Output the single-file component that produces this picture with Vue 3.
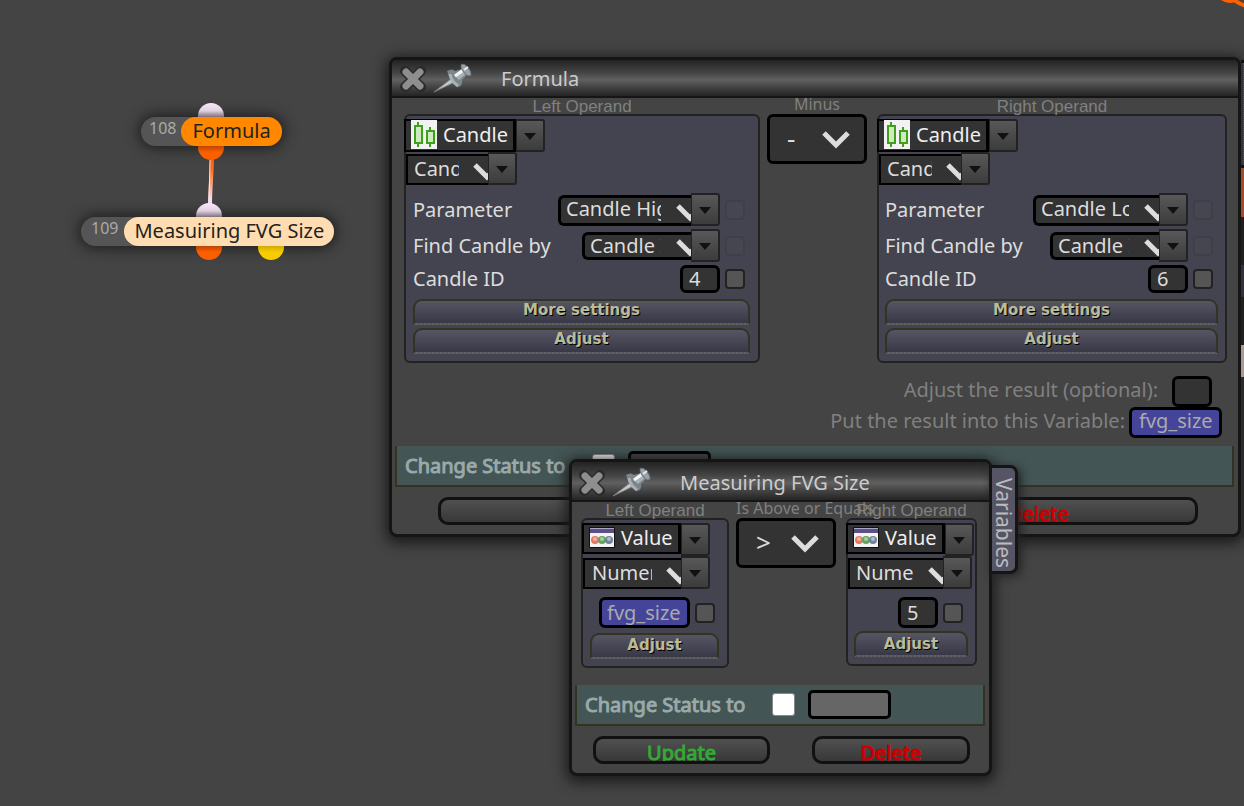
<script setup>
import { reactive } from 'vue'

const nodes = [
  { id: 108, title: 'Formula', kind: 'formula', ports: ['top', 'out'] },
  { id: 109, title: 'Measuiring FVG Size', kind: 'measure', ports: ['top', 'out', 'alt'] },
]

const windows = reactive([
  {
    key: 'formula', title: 'Formula', opLabel: 'Minus', op: '-',
    operands: [
      {
        side: 'left', label: 'Left Operand', source: 'Candle', icon: 'candle', type: 'Candle',
        selects: [
          { label: 'Parameter', value: 'Candle High', size: 'wide' },
          { label: 'Find Candle by', value: 'Candle ID', size: 'mid' },
        ],
        field: { label: 'Candle ID', value: '4' }, buttons: ['More settings', 'Adjust'],
      },
      {
        side: 'right', label: 'Right Operand', source: 'Candle', icon: 'candle', type: 'Candle',
        selects: [
          { label: 'Parameter', value: 'Candle Low', size: 'wide' },
          { label: 'Find Candle by', value: 'Candle ID', size: 'mid' },
        ],
        field: { label: 'Candle ID', value: '6' }, buttons: ['More settings', 'Adjust'],
      },
    ],
    adjust: '', variable: 'fvg_size', status: false, statusText: '',
  },
  {
    key: 'measure', title: 'Measuiring FVG Size', opLabel: 'Is Above or Equals', op: '>',
    operands: [
      {
        side: 'left', label: 'Left Operand', source: 'Value', icon: 'value', type: 'Numeric',
        selects: [], field: { label: '', value: 'fvg_size', variable: true }, buttons: ['Adjust'],
      },
      {
        side: 'right', label: 'Right Operand', source: 'Value', icon: 'value', type: 'Numeric',
        selects: [], field: { label: '', value: '5' }, buttons: ['Adjust'],
      },
    ],
    status: false, statusText: '',
  },
])
</script>

<template>
  <main class="canvas">
    <svg class="wires" aria-hidden="true">
      <defs>
        <linearGradient id="wire" x1="0" y1="0" x2="0" y2="1">
          <stop offset="0" stop-color="#ff6000" />
          <stop offset="0.25" stop-color="#ff6a18" />
          <stop offset="0.9" stop-color="#f2e2f4" />
        </linearGradient>
      </defs>
      <path d="M212 156 C212 175 210 185 210 206" fill="none" stroke="url(#wire)" stroke-width="4" />
      <path d="M210 160 L209 206" fill="none" stroke="#f2e2f4" stroke-width="1" />
      <path d="M1220 -3 Q1228 3 1234 0 Q1240 4 1248 7" fill="none" stroke="#ff6000" stroke-width="4" />
    </svg>

    <section v-for="n in nodes" :key="n.id" class="node" :class="n.kind">
      <i v-for="p in n.ports" :key="p" class="port" :class="p"></i>
      <span class="node-id">{{ n.id }}</span>
      <span class="node-title">{{ n.title }}</span>
    </section>

    <aside class="behind" aria-hidden="true">
      <i class="b-card"></i><i class="b-orange"></i><i class="b-dark"></i><i class="b-slim"></i><i class="b-dark"></i><i class="b-tan"></i>
    </aside>

    <section v-for="w in windows" :key="w.key" class="window" :class="'w-' + w.key">
      <header class="titlebar">
        <button class="tool" aria-label="Close">
          <svg width="26" height="28" viewBox="0 0 26 28">
            <path d="M5 6 L21 22 M21 6 L5 22" stroke="#2a2a2a" stroke-width="10" stroke-linecap="round" />
            <path d="M6 7 L20 21 M20 7 L6 21" stroke="#8e8e8e" stroke-width="7" stroke-linecap="round" />
          </svg>
        </button>
        <button class="tool" aria-label="Pin">
          <svg width="42" height="32" viewBox="0 0 42 32">
            <path d="M2 29 L20 15 L23 19 Z" fill="#c4c8ca" stroke="#72787c" stroke-width="1" />
            <path d="M15 8 Q20 5 23 8 L30 6 L35 12 L30 17 Q31 23 26 24 Q19 21 15 8 Z" fill="#7b858c" />
            <path d="M18 11 Q19 18 26 23" fill="none" stroke="#a9b2b7" stroke-width="3" />
            <path d="M22 12 L31 5 L35 10 L27 17 Z" fill="#aab2b6" />
            <path d="M23 13 L33 6" stroke="#f3f6f7" stroke-width="3" />
            <ellipse cx="34" cy="7" rx="3" ry="7" transform="rotate(-38 34 7)" fill="#99a3a9" stroke="#69747c" />
            <path d="M32 7 L36 4" stroke="#e6eaec" stroke-width="2" />
          </svg>
        </button>
        <h2>{{ w.title }}</h2>
      </header>

      <div class="body">
        <div class="equation">
          <template v-for="(o, i) in w.operands" :key="o.side">
            <div v-if="i === 1" class="operator">
              <label class="op-caption" :for="w.key + '-op'">{{ w.opLabel }}</label>
              <div class="op-box">
                <select :id="w.key + '-op'"><option>{{ w.op }}</option></select>
                <svg class="chevron" width="28" height="20" viewBox="0 0 28 20"><path d="M2 3 L14 15 L26 3" /></svg>
              </div>
            </div>
            <div class="operand" :class="o.side">
              <div class="caption">{{ o.label }}</div>
              <div class="card">
                <div class="source">
                  <button class="source-name">
                    <svg v-if="o.icon === 'candle'" width="26" height="29" viewBox="0 0 26 29">
                      <rect width="26" height="29" fill="#f2f2f2" />
                      <g fill="#cdebbf" stroke="#3fa01c" stroke-width="2">
                        <path d="M7 2 V6 M7 23 V27 M19 7 V11 M19 23 V27" />
                        <rect x="4" y="6" width="7" height="17" /><rect x="16" y="11" width="7" height="12" />
                      </g>
                    </svg>
                    <svg v-else width="26" height="22" viewBox="0 0 26 22">
                      <rect width="26" height="21" rx="1" fill="#111" />
                      <rect x="1" y="1" width="24" height="19" fill="#f4f4f4" />
                      <rect x="1" y="2" width="24" height="4" fill="#5b5184" /><rect x="1" y="1" width="24" height="1" fill="#aaa4c6" />
                      <circle cx="6" cy="13" r="4" fill="#e57863" /><circle cx="13" cy="13" r="4" fill="#64a060" /><circle cx="20" cy="13" r="4" fill="#70829c" />
                      <circle cx="6" cy="12" r="2" fill="#f4b0a0" /><circle cx="13" cy="12" r="2" fill="#a8d0a0" /><circle cx="20" cy="12" r="2" fill="#b0bccc" />
                    </svg>
                    <span>{{ o.source }}</span>
                  </button>
                  <button class="drop" aria-label="Open list"><i></i></button>
                </div>
                <div class="combo type">
                  <div class="clip">
                    <select aria-label="Type"><option>{{ o.type }}</option></select>
                    <svg class="chevron" width="28" height="20" viewBox="0 0 28 20"><path d="M2 3 L14 15 L26 3" /></svg>
                  </div>
                  <button class="drop" aria-label="Open list"><i></i></button>
                </div>
                <div v-for="s in o.selects" :key="s.label" class="row">
                  <label :for="w.key + o.side + s.size">{{ s.label }}</label>
                  <div class="combo" :class="s.size">
                    <div class="clip">
                      <select :id="w.key + o.side + s.size"><option>{{ s.value }}</option></select>
                      <svg class="chevron" width="28" height="20" viewBox="0 0 28 20"><path d="M2 3 L14 15 L26 3" /></svg>
                    </div>
                    <button class="drop" aria-label="Open list"><i></i></button>
                  </div>
                  <input type="checkbox" class="check" disabled :aria-label="s.label + ' option'" />
                </div>
                <div class="row field">
                  <label :for="w.key + o.side + 'v'">{{ o.field.label }}</label>
                  <input :id="w.key + o.side + 'v'" v-model="o.field.value" type="text" class="text" :class="{ variable: o.field.variable }" aria-label="Value" />
                  <input type="checkbox" class="check" aria-label="Value option" />
                </div>
                <button v-for="b in o.buttons" :key="b" class="more">{{ b }}</button>
              </div>
            </div>
          </template>
        </div>

        <div v-if="w.variable" class="result">
          <label for="adjust">Adjust the result (optional):</label>
          <input id="adjust" v-model="w.adjust" type="text" class="text adjust" />
        </div>
        <div v-if="w.variable" class="result">
          <label for="variable">Put the result into this Variable:</label>
          <input id="variable" v-model="w.variable" type="text" class="text variable" />
        </div>

        <div class="status">
          <label :for="w.key + '-status'">Change Status to</label>
          <input :id="w.key + '-status'" v-model="w.status" type="checkbox" />
          <input v-model="w.statusText" type="text" aria-label="Status" />
        </div>
        <footer>
          <button class="update"><span>Update</span></button>
          <button class="delete"><span>Delete</span></button>
        </footer>
      </div>
      <button v-if="w.key === 'measure'" class="tab">Variables</button>
    </section>
  </main>
</template>

<style>
body { margin: 0; background: #444; }
</style>

<style scoped>
* { box-sizing: border-box; }
.canvas {
  position: relative; min-height: 100vh; overflow: hidden; background: #444; color: #ddd;
  font: 20px/28px "Noto Sans", sans-serif;
}
button, input, select { font: inherit; color: inherit; margin: 0; padding: 0; border: 0; border-radius: 0; background: none; }
button { cursor: pointer; }
svg { display: block; fill: none; flex: none; }
.wires { position: absolute; inset: 0; width: 100%; height: 100%; }

.node { position: absolute; display: flex; height: 29px; border-radius: 15px; background: #555; box-shadow: 0 0 14px 2px #1c1c1c; }
.node.formula { left: 141px; top: 117px; }
.node.measure { left: 81px; top: 217px; }
.node-id { padding: 0 5px 0 8px; font-size: 16px; line-height: 23px; color: #aaa; position: relative; }
.node.measure .node-id { padding: 0 6px 0 10px; }
.node-title { position: relative; padding: 0 11px; border-radius: 15px; color: #222; line-height: 28px; }
.measure .node-title { padding: 0 10px; }
.formula .node-title { background: #ff8800; }
.measure .node-title { background: #ffddb0; }
.port { position: absolute; width: 26px; height: 26px; border-radius: 50%; left: 57px; }
.measure .port { left: 115px; }
.port.top { top: -14px; background: linear-gradient(#f8e8fa 0, #e0d0e2 30%, #64585f 60%); }
.port.out { bottom: -14px; background: linear-gradient(#a03800 35%, #fb5f00 70%); }
.measure .port.alt { left: 177px; bottom: -14px; background: linear-gradient(#c09a00 35%, #f8cc00 70%); }

.behind { position: absolute; z-index: 1; right: 0; top: 60px; width: 3px; display: flex; flex-direction: column; background: #2b2b2b; height: 478px; border-top: 3px solid #111; }
.behind .b-card { height: 102px; background: #343440; border-right: 1px dotted #555; }
.behind .b-orange { height: 52px; background: #a34d2b; border-top: 3px solid #111; }
.behind .b-dark { height: 48px; background: #1f1f1f; }
.behind .b-slim { height: 32px; background: #32323c; }
.behind .b-dark + .b-tan { height: 32px; background: #a89b93; }

.window { position: absolute; border: 3px solid #151515; border-radius: 8px; background: #444; box-shadow: 0 3px 14px 3px #1a1a1a; }
.w-formula { left: 389px; right: 3px; top: 57px; }
.w-measure { z-index: 2; left: 569px; width: 423px; top: 459px; }
.titlebar { display: flex; align-items: center; height: 38px; padding: 1px 0 0 8px; border-bottom: 2px solid #151515; border-radius: 5px 5px 0 0; background: linear-gradient(#222 0, #444 35%, #606060 55%, #444 75%, #242424 100%); }
.w-measure .titlebar { height: 40px; padding: 3px 0 0 7px; }
.titlebar h2 { margin: 0 0 0 27px; font-size: 20px; font-weight: 400; color: #ccc; }
.tool + .tool { margin-left: 6px; }

.equation { display: flex; align-items: flex-start; padding: 0 11px 0 12px; }
.operand.left { flex: 356 1 0; min-width: 0; }
.operand.right { flex: 350 1 0; min-width: 0; }
.w-measure .equation { padding: 0 12px 0 9px; }
.w-measure .left { flex-grow: 148; }
.w-measure .right { flex-grow: 131; }
.caption { height: 16px; text-align: center; white-space: nowrap; font: 17px/17px "Liberation Sans", sans-serif; color: #808080; }
.operator { flex: none; width: 100px; margin: 0 10px 0 7px; display: flex; flex-direction: column; align-items: center; }
.w-measure .operator { align-items: flex-start; }
.op-caption { height: 16px; font-size: 16px; line-height: 12px; color: #808080; white-space: nowrap; }
.op-box { position: relative; width: 100px; height: 50px; border: 3px solid #000; border-radius: 6px; background: #333; }
select { appearance: none; outline: 0; color: #ddd; }
.op-box select { width: 100%; height: 100%; padding: 0 40px 2px 17px; font-size: 26px; }
.chevron { position: absolute; right: 14px; top: 50%; margin-top: -9px; pointer-events: none; }
.chevron path { stroke: #ddd; stroke-width: 5; }

.card { border: 2px solid #222; border-radius: 6px; background: #444450; padding: 3px 0 7px; }
.source, .combo { display: flex; align-items: flex-end; height: 33px; }
.source { margin-left: -2px; }
.source-name { display: flex; align-items: center; gap: 6px; height: 33px; padding: 0 5px 2px; border: 2px solid #000; border-width: 2px 3px 2px 2px; background: #333; color: #eee; line-height: 27px; white-space: nowrap; }
.w-measure .source { margin-left: -1px; }
.w-measure .source-name { height: 31px; align-self: flex-start; }
.w-measure .right .source { margin-left: -2px; }
.drop { flex: none; width: 29px; height: 33px; display: grid; place-items: center; border: 2px solid #222; border-left-width: 1px; background: linear-gradient(#585858, #3c3c3c); border-radius: 0 3px 3px 0; }
.drop i { margin-top: 2px; border: 6px solid transparent; border-top: 7px solid #111; border-bottom: 0; }
.clip { position: relative; overflow: hidden; height: 31px; background: #333; border: 2px solid #000; border-right: 0; }
.clip select { display: block; width: 100%; height: 28px; margin-top: -1px; padding: 0 29px 0 6px; }
.clip .chevron { right: -13px; margin-top: -8px; }
.type .clip { width: 82px; }
.w-measure .type .clip { width: 98px; }
.w-measure .type .clip select { padding-left: 7px; }
.w-measure .right .type .clip { width: 95px; }
.w-measure .right .type .clip select { padding-left: 6px; }
.wide .clip, .mid .clip { border-radius: 6px 0 0 6px; border-width: 3px 0 3px 3px; }
.wide .clip { width: 133px; }
.mid { align-items: center; }
.mid .clip { width: 109px; height: 28px; }
.mid .clip select, .wide .clip select { margin-top: -3px; padding: 0 30px 0 5px; }
.right .wide .clip { width: 126px; }
.row { display: flex; align-items: center; height: 33px; margin-top: 3px; padding: 0 12px 0 7px; }
.left .combo ~ .row { padding-right: 13px; }
.right .row { padding-left: 6px; }
.combo + .row { margin-top: 8px; }
.row label { flex: 1; white-space: nowrap; }
.text { height: 31px; width: 40px; padding: 0 6px 1px; border: 3px solid #000; border-radius: 6px; background: #333; line-height: 24px; }
.row .text { height: 28px; }
.w-measure .row .text { height: 31px; padding-bottom: 0; }
.text.variable { width: 93px; padding: 0 6px 4px 7px; background: #444499; color: #aaa; }
.row .text.variable { width: 91px; padding: 0 5px; }
.check { appearance: none; width: 20px; height: 20px; margin-left: 5px; border: 2px solid #222; border-radius: 4px; background: #555; }
.check:disabled { opacity: 0.12; }
.field { height: 28px; margin-bottom: 6px; }
.w-measure .field { height: 31px; margin: 8px 0 5px; }
.w-measure .left .field { padding-right: 12px; }
.w-measure .right .field { margin-bottom: 3px; }
.more { display: block; width: calc(100% - 15px); height: 26px; margin: 0 8px 3px 7px; padding-bottom: 5px; border: 2px solid #333322; border-bottom: 2px dotted #62625c; border-radius: 9px 9px 0 0; background: linear-gradient(#555564, #383846); font: bold 15px/18px "DejaVu Sans", sans-serif; color: #bbbb99; text-shadow: 1px 1px 0 #000; }
.right .more { width: calc(100% - 13px); margin: 0 7px 3px 6px; }
.more:last-child { margin-bottom: 0; }
.w-measure .left .more { padding-bottom: 3px; }
.w-measure .right .more { padding-bottom: 0; }

.result { display: flex; justify-content: flex-end; align-items: center; gap: 4px; height: 31px; padding-right: 16px; color: #808080; }
.result label { padding-bottom: 3px; }
.equation + .result { margin-top: 13px; }
.adjust { margin: 0 10px; }
.status { display: flex; align-items: center; height: 41px; margin: 8px 4px 0 3px; padding: 0 8px; border: 2px solid #333322; border-top: 0; background: #445555; color: #99aaaa; }
.status label { -webkit-text-stroke: 1px #99aaaa; }
.equation + .status { margin-top: 17px; }
.status [type="checkbox"] { appearance: none; width: 23px; height: 23px; margin-left: 27px; border: 1px solid #888; border-radius: 3px; background: #fff; }
.status [type="text"] { width: 83px; height: 29px; margin-left: 13px; border: 3px solid #000; border-radius: 5px; background: #666; }
.w-formula .status [type="text"] { background: #444; }
footer { display: flex; justify-content: space-between; margin: 10px 40px 9px 46px; }
.w-measure footer { margin: 10px 19px 9px 21px; }
footer button { height: 28px; overflow: hidden; border: 3px solid #111; border-radius: 10px; background: linear-gradient(#505050, #383838); line-height: 27px; }
footer span { display: block; height: 22px; overflow: hidden; -webkit-text-stroke: 1px; }
.update { width: 47%; color: #33aa33; }
.delete { width: 42%; color: #cc0000; }
.tab { position: absolute; left: 100%; top: 3px; width: 29px; height: 109px; padding-top: 7px; border: 3px solid #151515; border-radius: 0 8px 8px 0; background: #555566; color: #bbb; writing-mode: vertical-rl; font-size: 21px; line-height: 23px; white-space: nowrap; box-shadow: 3px 2px 10px #222; }
</style>
